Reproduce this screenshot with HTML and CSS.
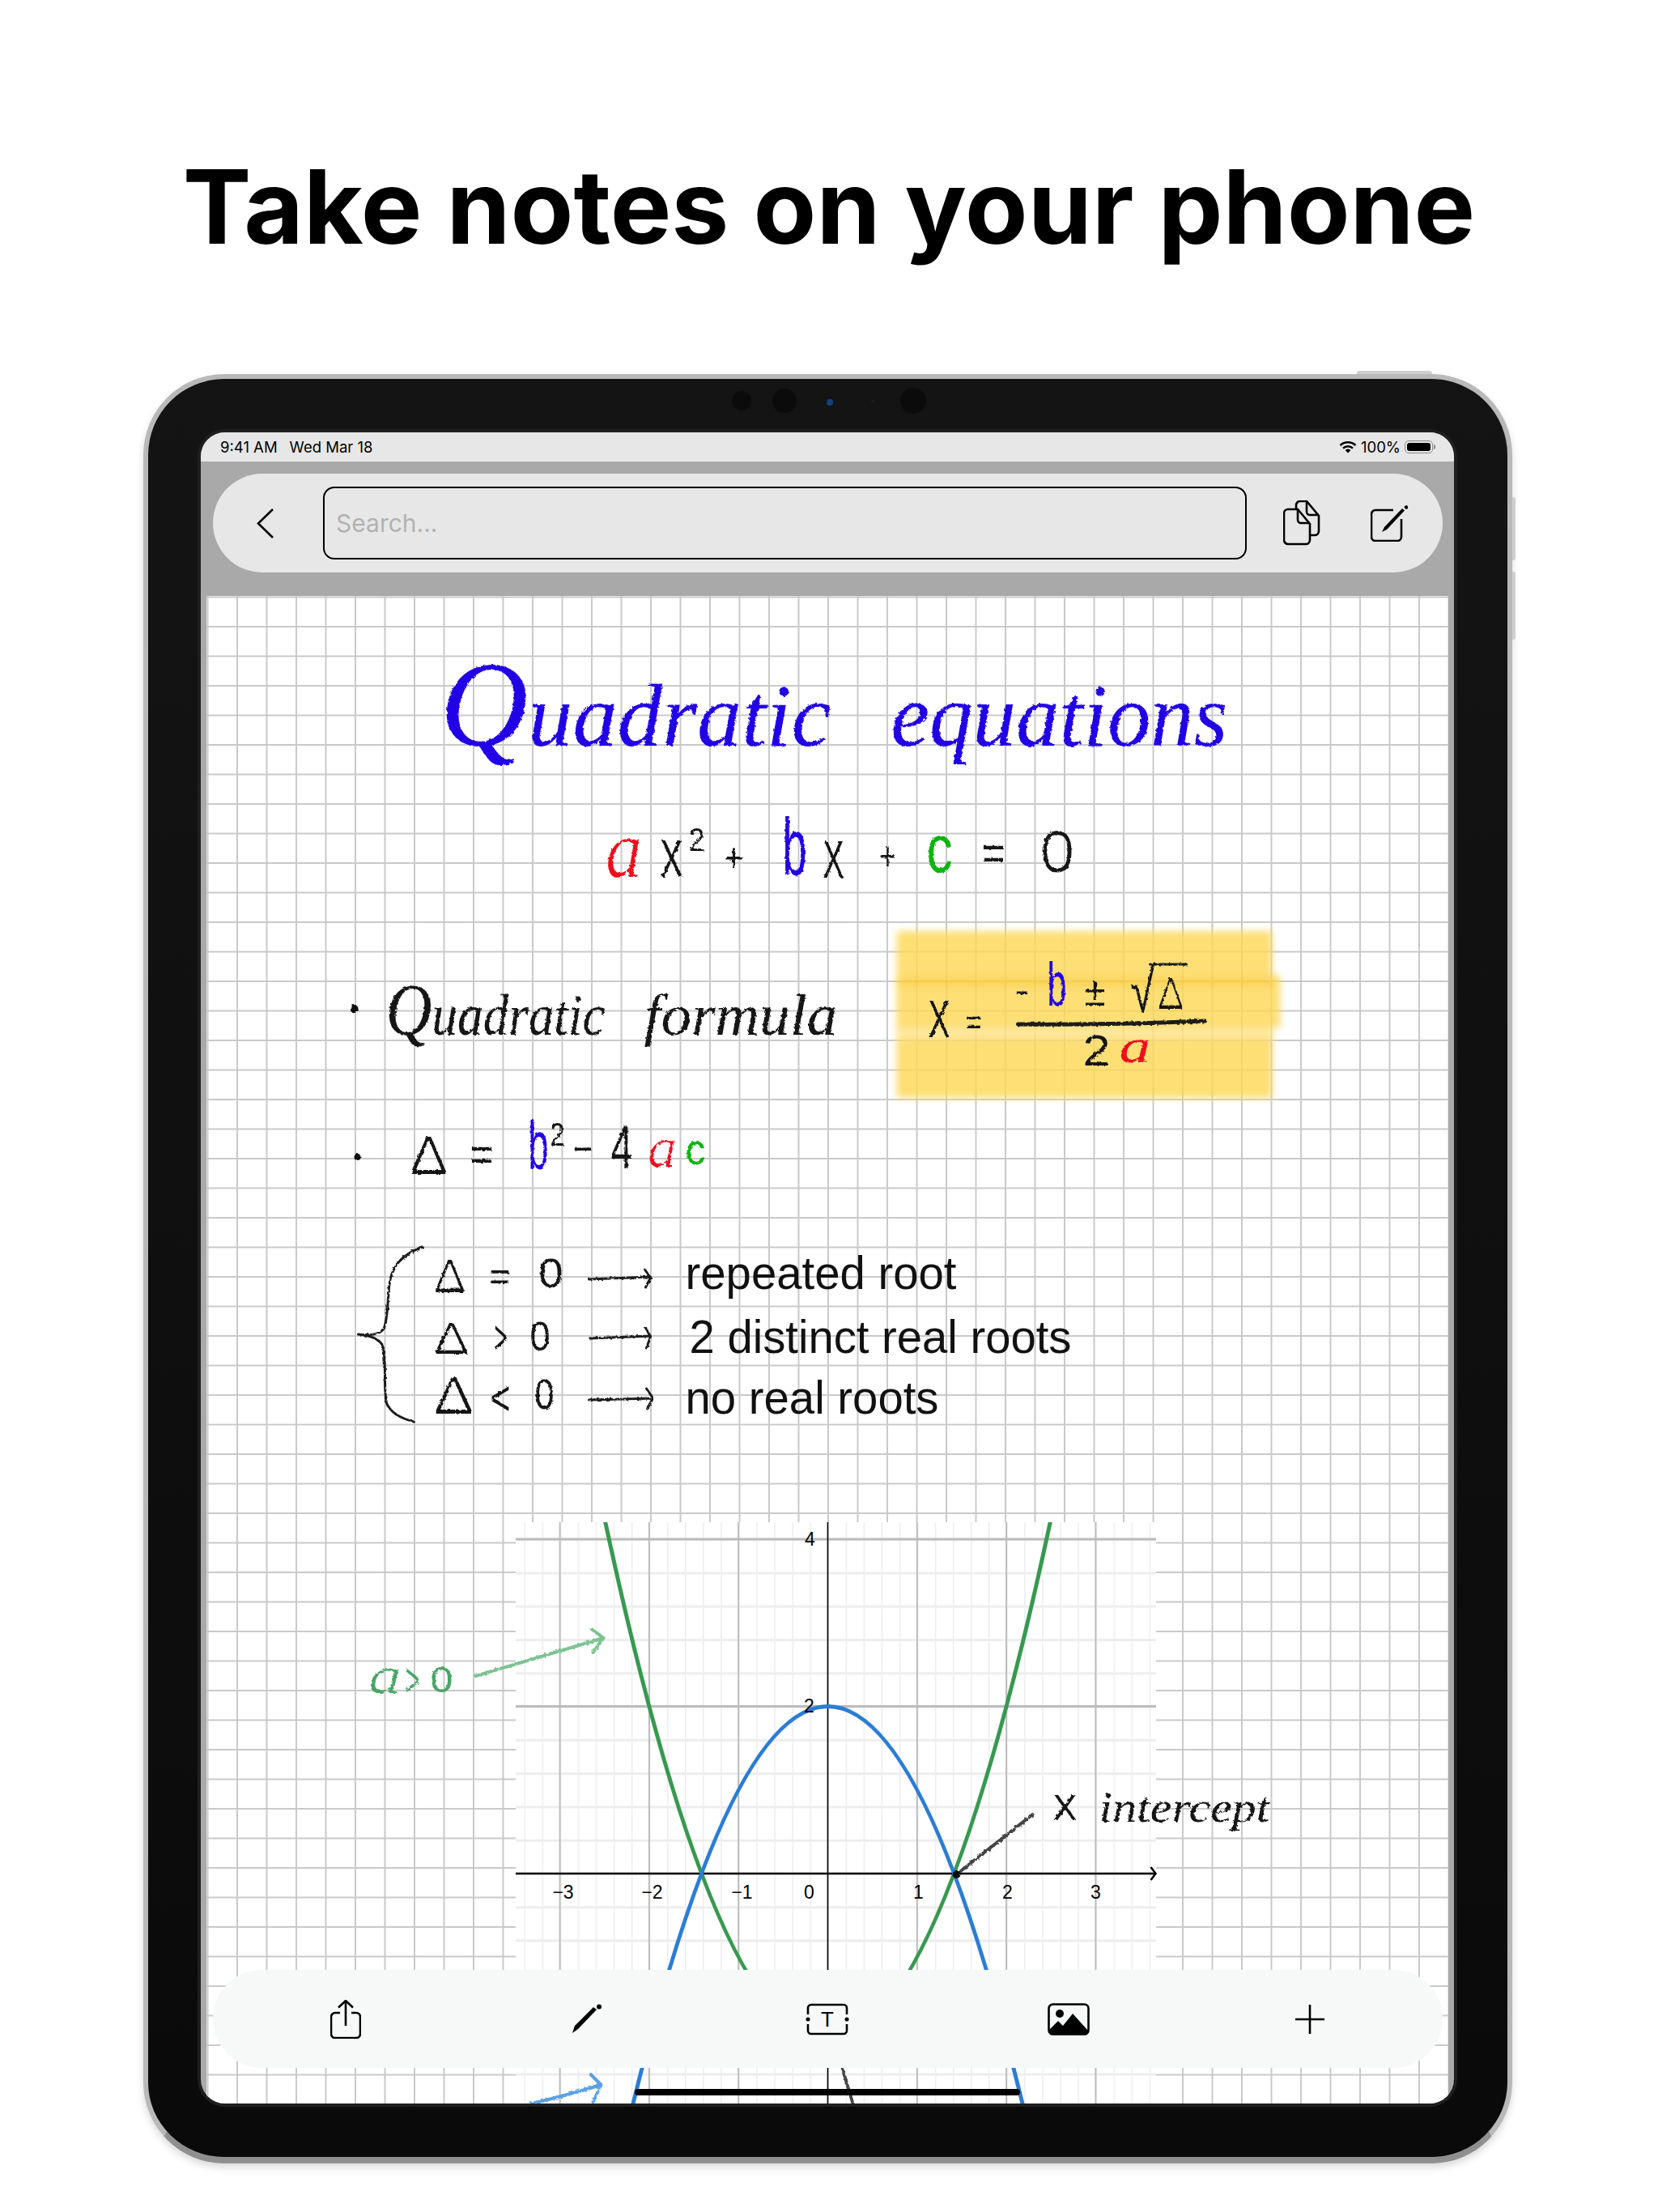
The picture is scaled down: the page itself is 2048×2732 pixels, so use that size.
FILE: index.html
```html
<!DOCTYPE html>
<html>
<head>
    <title>Take notes on your phone</title>
    <link rel="stylesheet" href="styles.css">
</head>
<body>
    <h1 class="headline">Take notes on your phone</h1>

    <div class="device">
        <span class="side-btn power"></span>
        <span class="side-btn vol-up"></span>
        <span class="side-btn vol-down"></span>
        <span class="sensor s1"></span>
        <span class="sensor s2"></span>
        <span class="sensor s3"></span>
        <span class="sensor s4"></span>
        <span class="sensor s5"></span>

        <div class="screen">
            <div class="status-bar">
                <div class="status-left">
                    <span>9:41 AM</span>
                    <span>Wed Mar 18</span>
                </div>
                <div class="status-right">
                    <svg class="wifi" viewBox="0 0 22 16">
                        <path d="M1.5 6a14 14 0 0 1 19 0M5 9.6a9 9 0 0 1 12 0"/>
                        <path class="wifi-dot" d="M11 15.5 7.6 12a5 5 0 0 1 6.8 0z"/>
                    </svg>
                    <span>100%</span>
                    <span class="battery"><span class="battery-fill"></span></span>
                </div>
            </div>

            <div class="top-band">
                <div class="top-pill">
                    <svg class="icon back" viewBox="0 0 21 37"><path d="M20 1 2 18.500 20 36"/></svg>
                    <div class="search">Search...</div>
                    <svg class="icon docs" viewBox="0 0 46 56">
                        <path d="M16 10V6a5 5 0 0 1 5-5h8l15 18v19a5 5 0 0 1-5 5h-5"/>
                        <path d="M29 1v13a4 4 0 0 0 4 4h11"/>
                        <path d="M6 11h12l15 18v20a5 5 0 0 1-5 5H6a5 5 0 0 1-5-5V16a5 5 0 0 1 5-5z"/>
                        <path d="M18 11v13a4 4 0 0 0 4 4h11"/>
                    </svg>
                    <svg class="icon compose" viewBox="0 0 46 45">
                        <path d="M28 6H6a5 5 0 0 0-5 5v28a5 5 0 0 0 5 5h27a5 5 0 0 0 5-5V17"/>
                        <path class="solid" d="M14 33l3-6L39 4l3 2.500L20 30z"/>
                        <circle class="solid" cx="44" cy="2.500" r="2.200"/>
                    </svg>
                </div>
            </div>

            <div class="paper">
                <svg class="note" viewBox="255 736 1533 1862">
                    <defs>
                        <filter id="ink" filterUnits="userSpaceOnUse" x="255" y="736" width="1533" height="1862">
                            <feTurbulence type="fractalNoise" baseFrequency="0.28" numOctaves="2" seed="4"/>
                            <feDisplacementMap in="SourceGraphic" scale="3.500"/>
                        </filter>
                        <filter id="thin">
                            <feMorphology operator="erode" radius="1 0"/>
                        </filter>
                        <filter id="marker" x="-5%" y="-10%" width="110%" height="120%">
                            <feGaussianBlur stdDeviation="4"/>
                        </filter>
                        <pattern id="minor-v" x="1022" y="0" width="22.060" height="10" patternUnits="userSpaceOnUse">
                            <rect class="minor-line" width="1.500" height="10"/>
                        </pattern>
                        <pattern id="major-v" x="1021" y="0" width="110.300" height="10" patternUnits="userSpaceOnUse">
                            <rect class="major-line" width="2" height="10"/>
                        </pattern>
                        <pattern id="minor-h" x="0" y="2313" width="10" height="41.280" patternUnits="userSpaceOnUse">
                            <rect class="minor-line" width="10" height="3"/>
                        </pattern>
                        <clipPath id="graph-clip"><rect x="636.500" y="1880" width="791" height="718"/></clipPath>
                    </defs>

                    <!-- highlighter behind the formula -->
                    <g class="marker">
                        <rect x="1107" y="1150" width="464" height="206"/>
                        <rect x="1107" y="1205" width="474" height="64"/>
                        <rect class="marker-band" x="1107" y="1208" width="466" height="10"/>
                        <rect class="marker-gap" x="1107" y="1270" width="466" height="12"/>
                    </g>

                    <!-- pasted graph -->
                    <g class="graph">
                        <rect class="graph-bg" x="636.500" y="1880" width="791" height="718"/>
                        <rect class="fill-minor-v" x="636.500" y="1880" width="791" height="718"/>
                        <rect class="fill-minor-h" x="636.500" y="1880" width="791" height="718"/>
                        <rect class="fill-major-v" x="636.500" y="1880" width="791" height="718"/>
                        <path class="major-h" d="M636.500 1901H1427.500M636.500 2107.500H1427.500"/>
                        <path class="y-axis" d="M1022 1880V2598"/>
                        <path class="x-axis" d="M636.500 2314H1426M1421 2306l6 8-6 8"/>
                        <g clip-path="url(#graph-clip)">
                            <path class="curve-green" d="M746.250 1875.400Q1022 3165.400 1297.750 1875.400"/>
                            <path class="curve-blue" d="M746.250 2752.600Q1022 1462.600 1297.750 2752.600"/>
                        </g>
                        <text class="tick" x="695" y="2345">−3</text>
                        <text class="tick" x="805" y="2345">−2</text>
                        <text class="tick" x="916" y="2345">−1</text>
                        <text class="tick" x="999" y="2345">0</text>
                        <text class="tick" x="1134" y="2345">1</text>
                        <text class="tick" x="1244" y="2345">2</text>
                        <text class="tick" x="1353" y="2345">3</text>
                        <text class="tick" x="1000" y="1909">4</text>
                        <text class="tick" x="999" y="2115">2</text>
                    </g>

                    <!-- handwriting -->
                    <g class="ink">
                        <text class="hand t110 blue" x="543" y="921" textLength="483" lengthAdjust="spacingAndGlyphs"><tspan class="t150">Q</tspan>uadratic</text>
                        <text class="hand t110 blue" x="1100" y="921" textLength="416" lengthAdjust="spacingAndGlyphs">equations</text>

                        <text class="hand t100 red thin" x="747" y="1083" textLength="46" lengthAdjust="spacingAndGlyphs">a</text>
                        <text class="mark t64" x="815" y="1083" textLength="28" lengthAdjust="spacingAndGlyphs">X</text>
                        <text class="mark t40" x="850" y="1051" textLength="20" lengthAdjust="spacingAndGlyphs">2</text>
                        <text class="mark t50" x="894" y="1076" textLength="24" lengthAdjust="spacingAndGlyphs">+</text>
                        <text class="mark t100 blue" x="966" y="1081" textLength="30" lengthAdjust="spacingAndGlyphs">b</text>
                        <text class="mark t64" x="1016" y="1084" textLength="26" lengthAdjust="spacingAndGlyphs">X</text>
                        <text class="mark t50" x="1086" y="1074" textLength="20" lengthAdjust="spacingAndGlyphs">+</text>
                        <text class="mark t84 green" x="1144" y="1077" textLength="32" lengthAdjust="spacingAndGlyphs">c</text>
                        <text class="mark t60" x="1212" y="1074" textLength="29" lengthAdjust="spacingAndGlyphs">=</text>
                        <text class="mark t72 thin" x="1284" y="1077" textLength="43" lengthAdjust="spacingAndGlyphs">0</text>

                        <circle class="dot" cx="437" cy="1246" r="5"/>
                        <text class="hand t72 black" x="476" y="1278" textLength="271" lengthAdjust="spacingAndGlyphs"><tspan class="t90">Q</tspan>uadratic</text>
                        <text class="hand t72 black" x="795" y="1278" textLength="239" lengthAdjust="spacingAndGlyphs">formula</text>

                        <text class="mark t64" x="1146" y="1281" textLength="27" lengthAdjust="spacingAndGlyphs">X</text>
                        <text class="mark t44" x="1192" y="1278" textLength="20" lengthAdjust="spacingAndGlyphs">=</text>
                        <text class="mark t44" x="1253" y="1238" textLength="18" lengthAdjust="spacingAndGlyphs">-</text>
                        <text class="mark t76 blue" x="1293" y="1242" textLength="24" lengthAdjust="spacingAndGlyphs">b</text>
                        <text class="mark t50" x="1339" y="1242" textLength="26" lengthAdjust="spacingAndGlyphs">±</text>
                        <text class="mark t76" x="1396" y="1250" textLength="30" lengthAdjust="spacingAndGlyphs">√</text>
                        <text class="mark t56 thin" x="1429" y="1246" textLength="33" lengthAdjust="spacingAndGlyphs">Δ</text>
                        <path class="stroke" d="M1420 1191H1465"/>
                        <path class="stroke thick" d="M1257 1265Q1370 1266 1488 1261"/>
                        <text class="mark t54" x="1337" y="1316" textLength="34" lengthAdjust="spacingAndGlyphs">2</text>
                        <text class="hand t60 red" x="1382" y="1312" textLength="39" lengthAdjust="spacingAndGlyphs">a</text>

                        <circle class="dot" cx="441" cy="1429" r="4"/>
                        <text class="mark t66 thin" x="505" y="1450" textLength="48" lengthAdjust="spacingAndGlyphs">Δ</text>
                        <text class="mark t60" x="580" y="1446" textLength="29" lengthAdjust="spacingAndGlyphs">=</text>
                        <text class="mark t84 blue" x="652" y="1444" textLength="25" lengthAdjust="spacingAndGlyphs">b</text>
                        <text class="mark t40" x="679" y="1415" textLength="18" lengthAdjust="spacingAndGlyphs">2</text>
                        <text class="mark t50" x="707" y="1436" textLength="25" lengthAdjust="spacingAndGlyphs">−</text>
                        <text class="mark t76" x="754" y="1443" textLength="27" lengthAdjust="spacingAndGlyphs">4</text>
                        <text class="hand t70 red thin" x="799" y="1441" textLength="37" lengthAdjust="spacingAndGlyphs">a</text>
                        <text class="mark t54 green" x="846" y="1438" textLength="25" lengthAdjust="spacingAndGlyphs">c</text>

                        <path class="stroke" d="M521 1540C495 1550 482 1565 480 1590C478 1615 478 1630 474 1640C470 1648 458 1650 442 1648C455 1650 470 1652 473 1665C477 1690 473 1715 477 1733C482 1745 495 1752 511 1756"/>

                        <text class="mark t58 thin" x="535" y="1596" textLength="40" lengthAdjust="spacingAndGlyphs">Δ</text>
                        <text class="mark t50" x="604" y="1593" textLength="26" lengthAdjust="spacingAndGlyphs">=</text>
                        <text class="mark t50" x="665" y="1590" textLength="30" lengthAdjust="spacingAndGlyphs">0</text>
                        <path class="stroke" d="M727 1580L803 1577M796 1568L803 1578L797 1590"/>

                        <text class="mark t56 thin" x="535" y="1672" textLength="44" lengthAdjust="spacingAndGlyphs">Δ</text>
                        <text class="mark t60" x="610" y="1672" textLength="16" lengthAdjust="spacingAndGlyphs">&gt;</text>
                        <text class="mark t50" x="654" y="1668" textLength="25" lengthAdjust="spacingAndGlyphs">0</text>
                        <path class="stroke" d="M728 1653L803 1650M797 1640L803 1651L798 1665"/>

                        <text class="mark t64 thin" x="535" y="1746" textLength="50" lengthAdjust="spacingAndGlyphs">Δ</text>
                        <text class="mark t60" x="605" y="1747" textLength="25" lengthAdjust="spacingAndGlyphs">&lt;</text>
                        <text class="mark t52" x="660" y="1740" textLength="24" lengthAdjust="spacingAndGlyphs">0</text>
                        <path class="stroke" d="M727 1729L806 1727M798 1715L806 1727L799 1740"/>

                        <text class="hand t64 green-soft thin" x="454" y="2091" textLength="42" lengthAdjust="spacingAndGlyphs">a</text>
                        <text class="mark t60 green-soft" x="500" y="2095" textLength="18" lengthAdjust="spacingAndGlyphs">&gt;</text>
                        <text class="mark t44 green-soft" x="531" y="2090" textLength="28" lengthAdjust="spacingAndGlyphs">0</text>
                        <path class="stroke arrow-green" d="M587 2070Q660 2048 745 2023M730 2012L745 2023L732 2041"/>

                        <text class="mark t44" x="1300" y="2248" textLength="30" lengthAdjust="spacingAndGlyphs">X</text>
                        <text class="hand t52 black" x="1357" y="2250" textLength="211" lengthAdjust="spacingAndGlyphs">intercept</text>
                        <path class="stroke arrow-grey" d="M1275 2241L1181 2315"/>
                        <circle class="dot" cx="1181" cy="2315" r="5"/>

                        <path class="stroke arrow-blue" d="M656 2598Q700 2588 742 2575M729 2562L742 2575L732 2596"/>
                        <path class="stroke arrow-grey" d="M1040 2555L1053 2598"/>
                    </g>

                    <!-- typed text -->
                    <text class="typed" x="846" y="1592" textLength="335" lengthAdjust="spacingAndGlyphs">repeated root</text>
                    <text class="typed" x="851" y="1671" textLength="472" lengthAdjust="spacingAndGlyphs">2 distinct real roots</text>
                    <text class="typed" x="846" y="1746" textLength="313" lengthAdjust="spacingAndGlyphs">no real roots</text>
                </svg>
            </div>

            <div class="bottom-bar">
                <div class="tool">
                    <svg class="icon share" viewBox="0 0 38 48">
                        <path d="M19 32V1.500M10 9.500 19 1l9 8.500"/>
                        <path d="M12 16H6a5 5 0 0 0-5 5v21a5 5 0 0 0 5 5h26a5 5 0 0 0 5-5V21a5 5 0 0 0-5-5h-6"/>
                    </svg>
                </div>
                <div class="tool">
                    <svg class="icon pencil" viewBox="0 0 36 37">
                        <path class="solid" d="M0 36l3-9L26 4l4 3L7 31z"/>
                        <circle class="solid" cx="33" cy="3.500" r="3"/>
                    </svg>
                </div>
                <div class="tool">
                    <svg class="icon textbox" viewBox="0 0 54 40">
                        <path d="M3 14V6a4 4 0 0 1 4-4h40a4 4 0 0 1 4 4v8M3 26v8a4 4 0 0 0 4 4h40a4 4 0 0 0 4-4v-8"/>
                        <circle class="solid" cx="3" cy="20" r="2.500"/>
                        <circle class="solid" cx="51" cy="20" r="2.500"/>
                        <text class="textbox-t" x="27" y="29">T</text>
                    </svg>
                </div>
                <div class="tool">
                    <svg class="icon picture" viewBox="0 0 52 40">
                        <rect x="1.500" y="1.500" width="49" height="37" rx="5"/>
                        <circle class="solid" cx="15" cy="13" r="5"/>
                        <path class="solid" d="M2 33l11-11 6 6 12-15 19 21v1a5 5 0 0 1-5 4H7a5 5 0 0 1-5-4z"/>
                    </svg>
                </div>
                <div class="tool">
                    <svg class="icon plus" viewBox="0 0 36 36"><path d="M18 0v36M0 18h36"/></svg>
                </div>
            </div>
            <div class="home-bar"></div>
        </div>
    </div>
</body>
</html>
```
FILE: styles.css
```css
body {
    margin: 0;
    width: 2048px;
    height: 2732px;
    background-color: #fff;
    overflow: hidden;
}

.headline {
    margin: 0;
    height: 462px;
    box-sizing: border-box;
    padding-top: 185px;
    font-family: "Inter", "Liberation Sans", sans-serif;
    font-size: 127px;
    font-weight: 700;
    line-height: 140px;
    text-align: center;
    color: #000;
}

/* tablet */
.device {
    position: relative;
    width: 1691px;
    height: 2210px;
    margin-left: 177px;
    box-sizing: border-box;
    padding: 66px 66px 66px 65px;
    border: 6px solid #b9b9b9;
    border-bottom: 8px solid #8f8f8f;
    border-radius: 100px;
    background: linear-gradient(#141414, #0a0a0a);
    box-shadow: 0 5px 10px rgba(0, 0, 0, 0.15);
}

.side-btn {
    position: absolute;
    background-color: #cfcfcf;
}

.power {
    top: -10px;
    right: 93px;
    width: 93px;
    height: 4px;
    border-radius: 3px 3px 0 0;
}

.vol-up,
.vol-down {
    right: -10px;
    width: 4px;
    border-radius: 0 3px 3px 0;
}

.vol-up {
    top: 146px;
    height: 78px;
}

.vol-down {
    top: 238px;
    height: 84px;
}

.sensor {
    position: absolute;
    border-radius: 50%;
    background-color: #0b0b0b;
}

.s1 { left: 721px; top: 15px; width: 24px; height: 24px; }
.s2 { left: 771px; top: 12px; width: 30px; height: 30px; }
.s3 { left: 836px; top: 23px; width: 8px; height: 8px; background-color: #12427a; border: 2px solid #10161f; }
.s4 { left: 929px; top: 11px; width: 32px; height: 32px; }
.s5 { left: 893px; top: 25px; width: 4px; height: 4px; background-color: #1d1d1d; }

.screen {
    position: relative;
    display: flex;
    flex-direction: column;
    height: 100%;
    border-radius: 30px;
    background-color: #a9a9a9;
    overflow: hidden;
    box-shadow: 0 0 0 4px #1f1f1f;
}

.status-bar {
    display: flex;
    justify-content: space-between;
    align-items: center;
    height: 36px;
    padding: 0 26px 0 24px;
    background-color: #e7e7e7;
    font-family: "Inter", "Liberation Sans", sans-serif;
    font-size: 18.500px;
    color: #000;
}

.status-left {
    display: flex;
    gap: 15px;
}

.status-right {
    display: flex;
    align-items: center;
    gap: 5px;
}

.wifi {
    width: 22px;
    height: 16px;
    fill: none;
    stroke: #000;
    stroke-width: 2.500;
}

.wifi-dot {
    fill: #000;
    stroke: none;
}

.battery {
    display: block;
    position: relative;
    width: 35px;
    height: 16px;
    box-sizing: border-box;
    padding: 2px;
    border: 1px solid #8a8a8a;
    border-radius: 5px;
}

.battery::after {
    content: "";
    position: absolute;
    top: 4px;
    right: -4px;
    width: 2px;
    height: 6px;
    border-radius: 0 2px 2px 0;
    background-color: #8a8a8a;
}

.battery-fill {
    display: block;
    height: 100%;
    border-radius: 3px;
    background-color: #000;
}

.top-band {
    height: 166px;
    box-sizing: border-box;
    padding: 15px 14px 29px 15px;
}

.top-pill {
    display: flex;
    align-items: center;
    height: 122px;
    padding: 0 43px 0 54px;
    border-radius: 61px;
    background-color: #e7e7e7;
}

.icon {
    display: block;
    flex: none;
    fill: none;
    stroke: #000;
    stroke-width: 2.600;
}

.icon .solid {
    fill: #000;
    stroke: none;
}

.back {
    width: 21px;
    height: 37px;
    margin-right: 61px;
}

.search {
    flex: 1;
    height: 90px;
    box-sizing: border-box;
    padding-left: 14px;
    border: 2px solid #000;
    border-radius: 14px;
    font-family: "Inter", "Liberation Sans", sans-serif;
    font-size: 30px;
    line-height: 86px;
    color: #b2b2b2;
}

.docs {
    width: 46px;
    height: 56px;
    margin-left: 45px;
    margin-right: 62px;
}

.compose {
    width: 46px;
    height: 45px;
}

/* notebook page */
.paper {
    flex: 1;
    margin: 0 7px;
    background-color: #fff;
    background-image:
        linear-gradient(#c9c9c9 0, #c9c9c9 2px, transparent 2px),
        linear-gradient(90deg, #c9c9c9 0, #c9c9c9 1.500px, transparent 1.500px);
    background-size: 100% 36.500px, 36.500px 100%;
    background-position: 0 37px, 37px 0;
    min-height: 0;
}

.note {
    display: block;
    width: 100%;
    height: 100%;
}

.marker {
    fill: #fdd858;
    opacity: 0.82;
    filter: url(#marker);
}

.marker-band {
    fill: #fbc92a;
}

.marker-gap {
    fill: #ffe48a;
}

.graph-bg { fill: #fff; }
.fill-minor-v { fill: url(#minor-v); }
.fill-minor-h { fill: url(#minor-h); }
.fill-major-v { fill: url(#major-v); }
.minor-line { fill: #ededed; }
.major-line { fill: #bcbcbc; }

.major-h {
    fill: none;
    stroke: #bcbcbc;
    stroke-width: 3;
}

.y-axis {
    stroke: #000;
    stroke-width: 1.500;
}

.x-axis {
    fill: none;
    stroke: #000;
    stroke-width: 2.500;
}

.curve-green,
.curve-blue {
    fill: none;
    stroke-width: 5;
}

.curve-green { stroke: #37994f; }
.curve-blue { stroke: #2b7dd6; }

.tick {
    font-family: "Liberation Sans", sans-serif;
    font-size: 23px;
    text-anchor: middle;
    fill: #000;
}

.ink {
    filter: url(#ink);
    fill: #151515;
}

.hand {
    font-family: "Liberation Serif", serif;
    font-style: italic;
}

.mark {
    font-family: "Liberation Sans", sans-serif;
}

.thin {
    filter: url(#thin);
}

.t40 { font-size: 40px; }
.t44 { font-size: 44px; }
.t50 { font-size: 50px; }
.t52 { font-size: 52px; }
.t54 { font-size: 54px; }
.t56 { font-size: 56px; }
.t58 { font-size: 58px; }
.t60 { font-size: 60px; }
.t64 { font-size: 64px; }
.t66 { font-size: 66px; }
.t70 { font-size: 70px; }
.t72 { font-size: 72px; }
.t76 { font-size: 76px; }
.t84 { font-size: 84px; }
.t90 { font-size: 90px; }
.t100 { font-size: 100px; }
.t110 { font-size: 110px; }
.t150 { font-size: 150px; }

.blue { fill: #2200e6; }
.red { fill: #f0101f; }
.green { fill: #0fb40f; }
.black { fill: #151515; }
.green-soft { fill: #4aa567; }

.dot { fill: #111; }

.stroke {
    fill: none;
    stroke: #1a1a1a;
    stroke-width: 3;
    stroke-linecap: round;
    stroke-linejoin: round;
}

.thick { stroke-width: 5; }
.arrow-green { stroke: #7dc292; stroke-width: 4; }
.arrow-grey { stroke: #444; stroke-width: 4; }
.arrow-blue { stroke: #5ba0e4; stroke-width: 4; }

.typed {
    font-family: "Liberation Sans", sans-serif;
    font-size: 58px;
    fill: #111;
}

/* floating tool bar */
.bottom-bar {
    position: absolute;
    left: 15px;
    right: 14px;
    bottom: 44px;
    display: grid;
    grid-template-columns: repeat(5, 1fr);
    height: 121px;
    padding: 0 15px;
    border-radius: 61px;
    background-color: #f7f8f8;
}

.tool {
    display: flex;
    justify-content: center;
    align-items: center;
}

.share { width: 38px; height: 48px; }
.pencil { width: 36px; height: 37px; }
.textbox { width: 54px; height: 40px; }
.picture { width: 52px; height: 40px; }
.plus { width: 36px; height: 36px; }

.textbox-t {
    font-family: "Liberation Sans", sans-serif;
    font-size: 26px;
    text-anchor: middle;
    fill: #000;
    stroke: none;
}

.home-bar {
    position: absolute;
    left: 536px;
    bottom: 10px;
    width: 476px;
    height: 8px;
    border-radius: 4px;
    background-color: #000;
}
```
